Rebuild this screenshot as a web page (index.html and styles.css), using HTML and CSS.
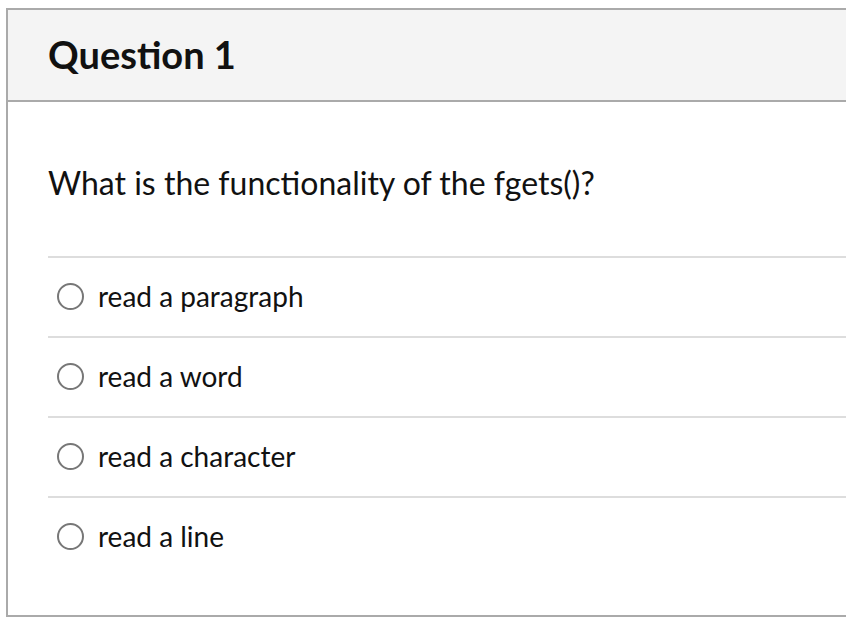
FILE: index.html
```html
<!DOCTYPE html>
<html>
<head>
<meta charset="utf-8">
<link rel="stylesheet" href="styles.css">
</head>
<body>
<div class="card">
  <div class="card-header"><h2 class="title">Question 1</h2></div>
  <div class="card-body">
    <p class="question">What is the functionality of the fgets()?</p>
    <div class="answers">
      <label class="answer"><span class="radio"></span><span class="answer-text">read a paragraph</span></label>
      <label class="answer"><span class="radio"></span><span class="answer-text">read a word</span></label>
      <label class="answer"><span class="radio"></span><span class="answer-text">read a character</span></label>
      <label class="answer"><span class="radio"></span><span class="answer-text">read a line</span></label>
    </div>
  </div>
</div>
</body>
</html>
```
FILE: styles.css
```css
html, body {
  margin: 0;
  padding: 0;
  background: #ffffff;
  overflow: hidden;
}
body {
  font-family: Lato, "Liberation Sans", sans-serif;
  color: #111111;
  padding: 8px 0 0 6px;
}
.card {
  width: 870px;
  border: 2px solid #aaaaaa;
  border-right: none;
  background: #ffffff;
}
.card-header {
  box-sizing: border-box;
  height: 92px;
  background: #f4f4f4;
  border-bottom: 2px solid #aaaaaa;
  display: flex;
  align-items: center;
  padding: 0 0 1px 40px;
}
.title {
  margin: 0;
  font-size: 38px;
  font-weight: 700;
  color: #111111;
  line-height: 1.2;
}
.card-body {
  padding: 0 0 39px 40px;
}
.question {
  margin: 0;
  padding: 62px 0 54px;
  font-size: 32px;
  line-height: 1.2;
}
.answer {
  box-sizing: border-box;
  display: flex;
  align-items: center;
  height: 80px;
  padding-bottom: 1px;
  border-top: 2px solid #dddddd;
}
.radio {
  box-sizing: border-box;
  width: 27px;
  height: 27px;
  border: 2px solid #777777;
  border-radius: 50%;
  margin-left: 9px;
  margin-right: 14px;
  flex: none;
}
.answer-text {
  font-size: 28px;
  line-height: 1.2;
}
```
